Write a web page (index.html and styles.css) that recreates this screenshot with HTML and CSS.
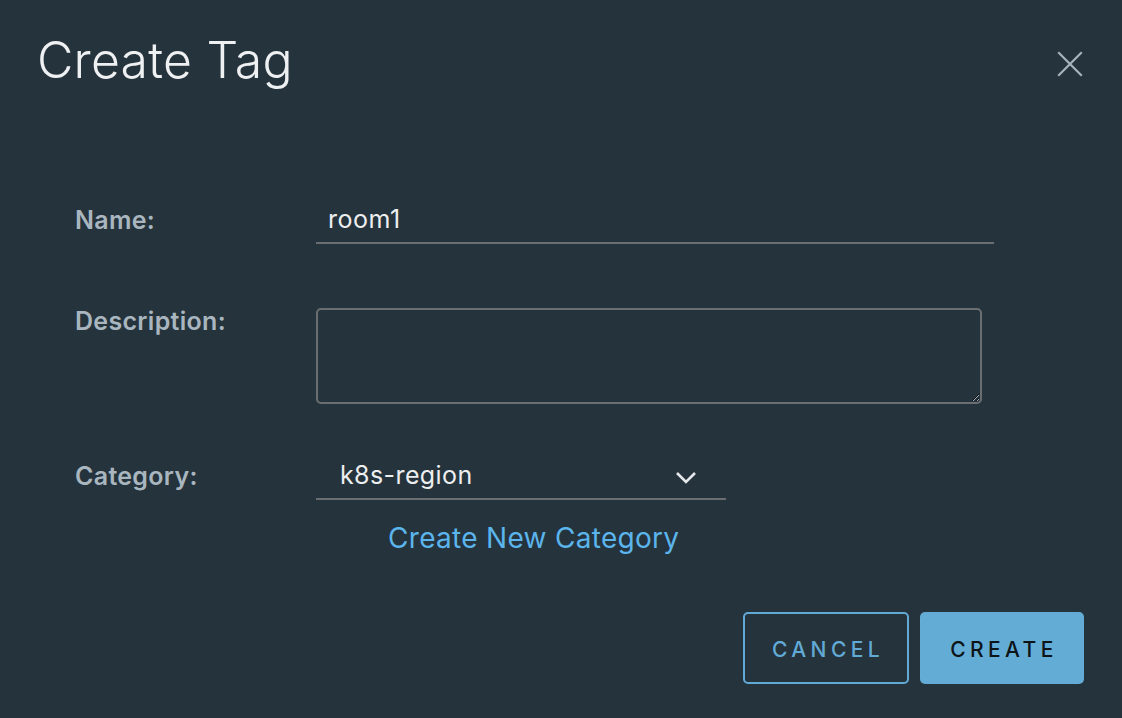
FILE: index.html
```html
<!DOCTYPE html>
<html lang="en">
<head>
<meta charset="utf-8">
<title>Create Tag</title>
<link rel="stylesheet" href="styles.css">
</head>
<body>
<div class="dialog">
  <header class="dialog-header">
    <h1 class="dialog-title">Create Tag</h1>
    <button class="close-btn" aria-label="Close">
      <svg width="26" height="26" viewBox="0 0 26 26"><path d="M2 2 L24 24 M24 2 L2 24" stroke="#a7b3bb" stroke-width="2.2" fill="none" stroke-linecap="square"/></svg>
    </button>
  </header>
  <form class="form">
    <div class="row row-name">
      <label class="label">Name:</label>
      <div class="input-line"><span class="input-text">room1</span></div>
    </div>
    <div class="row row-desc">
      <label class="label">Description:</label>
      <textarea class="textarea"></textarea>
    </div>
    <div class="row row-cat">
      <label class="label">Category:</label>
      <div class="select">
        <span class="select-text">k8s-region</span>
        <svg class="chevron" width="22" height="14" viewBox="0 0 22 14"><path d="M2 2 L11 11 L20 2" stroke="#e6e9eb" stroke-width="2.6" fill="none"/></svg>
      </div>
    </div>
    <div class="link-row"><a class="link">Create New Category</a></div>
  </form>
  <footer class="footer">
    <button class="btn btn-outline">CANCEL</button>
    <button class="btn btn-primary">CREATE</button>
  </footer>
</div>
</body>
</html>
```
FILE: styles.css
```css
html, body {
  margin: 0;
  padding: 0;
  background: #25333c;
  height: 100%;
}
body {
  font-family: "Inter", "Open Sans", sans-serif;
  color: #e6e9eb;
}
.dialog {
  width: 1122px;
  height: 718px;
  box-sizing: border-box;
}
.dialog-header {
  display: flex;
  justify-content: space-between;
  align-items: flex-start;
  padding: 30px 39px 0 37px;
}
.dialog-title {
  margin: 0;
  font-size: 50px;
  font-weight: 300;
  line-height: 60px;
  color: #eef0f2;
  letter-spacing: 0.2px;
}
.close-btn {
  background: none;
  border: 0;
  padding: 0;
  margin-top: 21px;
  width: 26px;
  height: 26px;
  display: flex;
}
.form {
  padding: 0 0 0 75px;
  margin-top: 114px;
}
.row {
  display: flex;
  align-items: flex-start;
}
.label {
  width: 241px;
  flex: none;
  font-size: 25px;
  font-weight: 600;
  color: #a9b6bf;
  line-height: 30px;
  letter-spacing: 0.3px;
}
.row-name .label {
  margin-top: 1px;
}
.input-line {
  width: 654px;
  height: 37px;
  border-bottom: 2px solid #6b6e70;
  padding: 1px 12px 0;
  box-sizing: content-box;
}
.input-text {
  font-size: 25px;
  line-height: 28px;
  color: #eceeef;
  letter-spacing: 0.5px;
}
.row-desc {
  margin-top: 64px;
}
.row-desc .label {
  margin-top: -2px;
}
.textarea {
  width: 666px;
  height: 96px;
  box-sizing: border-box;
  border: 2px solid #6b6e70;
  border-radius: 5px;
  background: transparent;
  resize: both;
  margin: 0;
  font: inherit;
  color: #eceeef;
}
.row-cat {
  margin-top: 56px;
}
.row-cat .label {
  margin-top: 1px;
}
.select {
  width: 410px;
  height: 40px;
  box-sizing: border-box;
  border-bottom: 2px solid #6b6e70;
  display: flex;
  align-items: center;
  justify-content: space-between;
  padding: 0 29px 8px 24px;
}
.select-text {
  font-size: 25px;
  color: #eceeef;
  line-height: 28px;
  letter-spacing: 0.4px;
}
.chevron {
  margin-top: 6px;
}
.link-row {
  padding-left: 313px;
  margin-top: 21px;
}
.link {
  font-size: 28px;
  color: #5bb5ec;
  line-height: 34px;
  letter-spacing: 0.3px;
}
.footer {
  display: flex;
  justify-content: flex-end;
  gap: 11px;
  padding: 0 38px 0 0;
  margin-top: 57px;
}
.btn {
  height: 72px;
  border-radius: 5px;
  font-family: inherit;
  font-size: 21px;
  font-weight: 500;
  letter-spacing: 4.4px;
  padding: 3px 0 0 4px;
  box-sizing: border-box;
}
.btn-outline {
  width: 166px;
  background: transparent;
  border: 2px solid #62aad6;
  color: #62aad6;
}
.btn-primary {
  width: 164px;
  background: #62acd6;
  border: 0;
  color: #0d1418;
}
```
